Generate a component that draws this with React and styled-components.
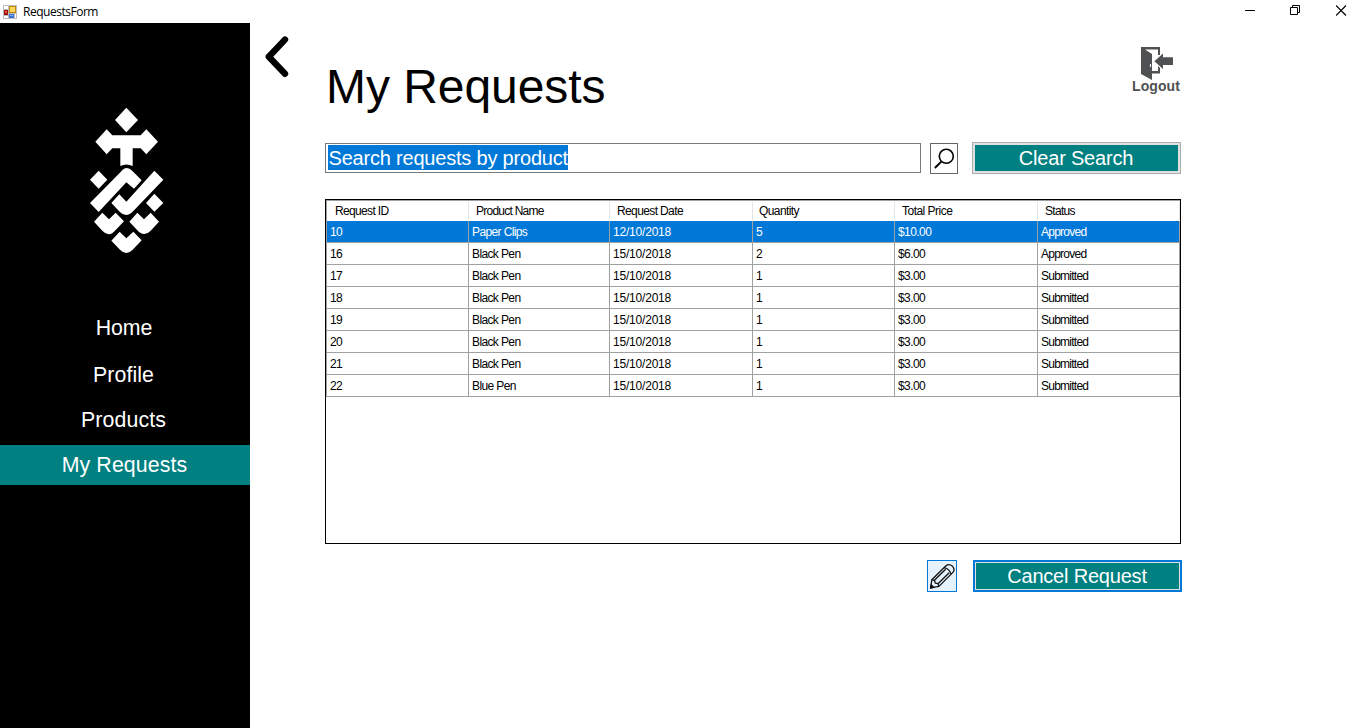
import React from "react";
import styled, { createGlobalStyle, css } from "styled-components";

const Global = createGlobalStyle`
  * { box-sizing: border-box; }
  html, body { margin: 0; height: 100%; overflow: hidden; background: #fff; }
  body { font-family: "Liberation Sans", Arial, sans-serif; color: #000; }
  button { font-family: inherit; padding: 0; margin: 0; }
`;

const Window = styled.div`
  display: flex;
  flex-direction: column;
  width: 1366px;
  height: 728px;
  background: #fff;
`;

const TitleBar = styled.header`
  display: flex;
  align-items: center;
  height: 23px;
  flex: none;
  padding: 0 20px 0 3px;
`;

const WindowTitle = styled.span`
  flex: 1;
  margin: 1px 0 0 6px;
  font: 12px/20px "Open Sans", "Noto Sans", sans-serif;
  letter-spacing: -0.48px;
`;

const WindowControls = styled.div`
  display: flex;
  gap: 35px;
  margin: -3px -1px 0 0;
  svg { display: block; }
  svg + svg { margin-left: -1px; }
  svg + svg + svg { margin-left: 0; }
`;

const Body = styled.div`
  display: flex;
  flex: 1;
  min-height: 0;
`;

const Sidebar = styled.nav`
  display: flex;
  flex-direction: column;
  width: 250px;
  background: #000;
`;

const LogoArea = styled.div`
  height: 285px;
  padding: 72px 0 0 70px;
  svg { display: block; }
`;

const NavItem = styled.a`
  display: flex;
  align-items: center;
  justify-content: center;
  height: 40px;
  margin-bottom: ${(p) => p.$gap || 5}px;
  padding-right: ${(p) => p.$inset ?? 3}px;
  color: #fff;
  font-size: 21.33px;
  letter-spacing: ${(p) => p.$spacing || "0.1px"};
  background: ${(p) => (p.$active ? "#008080" : "transparent")};
`;

const Main = styled.main`
  display: flex;
  flex: 1;
  padding: 12px 0 0 14px;
`;

const BackButton = styled.button`
  width: 26px;
  height: 44px;
  border: 0;
  background: none;
  svg { display: block; }
`;

const Content = styled.section`
  display: flex;
  flex-direction: column;
  width: 857px;
  margin-left: 35px;
`;

const Heading = styled.div`
  display: flex;
  justify-content: space-between;
  height: 107px;
`;

const PageTitle = styled.h1`
  margin: 24px 0 0 1px;
  font-size: 48px;
  line-height: 55px;
  font-weight: 400;
  letter-spacing: -0.05px;
`;

const Logout = styled.button`
  display: flex;
  flex-direction: column;
  align-items: center;
  width: 50px;
  height: 60px;
  margin: 11px 1px 0 0;
  padding: 0;
  border: 0;
  background: none;
  color: #505153;
  font-weight: 700;
  font-size: 14px;
  letter-spacing: 0.1px;
  line-height: 13px;
  svg { display: block; flex: none; }
`;

const SearchRow = styled.div`
  display: flex;
  align-items: flex-start;
  height: 57px;
`;

const SearchBox = styled.div`
  width: 596px;
  height: 30px;
  margin: 1px 9px 0 0;
  padding: 1px 2px;
  border: 1px solid #7a7a7a;
`;

const Selection = styled.span`
  display: block;
  width: 240px;
  height: 25px;
  padding-left: 0.5px;
  color: #fff;
  background: #0078d7;
  font-size: 20px;
  line-height: 26px;
  letter-spacing: -0.2px;
  white-space: nowrap;
`;

const SquareButton = styled.button`
  display: block;
  width: ${(p) => p.$width}px;
  height: ${(p) => p.$height}px;
  border: 1px solid ${(p) => (p.$hot ? "#0078d7" : "#666")};
  background: ${(p) => (p.$hot ? "#e5f1fb" : "#fff")};
  svg { display: block; }
`;

const SearchButton = styled(SquareButton)`
  margin: 1px 14px 0 0;
`;

const ActionButton = styled.button`
  width: 209px;
  height: 32px;
  padding-right: 1px;
  color: #fff;
  font-size: 20px;
  line-height: 24px;
  letter-spacing: -0.2px;
  background: #008080;
  ${(p) =>
    p.$focused
      ? css`
          border: 2px solid #0078d7;
          box-shadow: inset 0 0 0 1px #e1e1e1;
        `
      : css`
          border: 1px solid #adadad;
          box-shadow: inset 0 0 0 2px #e1e1e1;
        `}
`;

const Grid = styled.div`
  width: 856px;
  height: 345px;
  border: 1px solid #000;
  font-size: 12px;
`;

const GridRow = styled.div`
  display: grid;
  grid-template-columns: 142px 141px 143px 142px 143px 142px;
  width: 854px;
  height: 22px;
  border-left: 1px solid #a0a0a0;
  color: ${(p) => (p.$selected ? "#fff" : "#000")};
`;

const HeaderRow = styled(GridRow)`
  height: 21px;
  border-top: 1px solid #a0a0a0;
`;

const Cell = styled.div`
  padding-left: 3px;
  line-height: 22px;
  height: 22px;
  letter-spacing: ${(p) => p.$spacing};
  white-space: nowrap;
  border-right: 1px solid #a0a0a0;
  border-bottom: 1px solid #a0a0a0;
  background: ${(p) => (p.$selected ? "#0078d7" : "#fff")};
`;

const HeaderCell = styled.div`
  padding-left: ${(p) => p.$pad}px;
  line-height: 20px;
  letter-spacing: ${(p) => p.$spacing};
  white-space: nowrap;
  border-bottom: 1px solid #a0a0a0;
  background: linear-gradient(#e5e5e5, #e5e5e5) right 1px / 1px 18px no-repeat;
`;

const Footer = styled.div`
  display: flex;
  justify-content: flex-end;
  gap: 16px;
  margin-top: 16px;
`;

const FormIcon = () => (
  <svg width="14" height="14" viewBox="0 0 14 14">
    <rect width="14" height="14" fill="#bdbdbd" />
    <path d="M1 1h4v3H1zM1 11h4v2H1zM12 9h1v4h-1z" fill="#fff" />
    <rect x="6" y="1" width="7" height="7" fill="#c38a0a" />
    <rect x="7" y="2" width="5" height="5" fill="#ffd75a" />
    <rect x="1" y="5" width="4" height="5" fill="#a3130c" />
    <rect x="2" y="6" width="2" height="2" fill="#e55a4a" />
    <rect x="6" y="9" width="5" height="4" fill="#3d74d4" />
    <rect x="7" y="10" width="3" height="1" fill="#83b0f4" />
  </svg>
);

const Logo = () => (
  <svg width="110" height="170" viewBox="0 0 330 510" fill="#fff">
    <path d="M169 38L204 75L169 112L135 75Z" />
    <path d="M110 103L127 121H212L229 103L264 140L229 178L212 160H188V213Q169 204 151 213V160H127L110 178L76 140Z" />
    <path d="M86 227L112 254L86 281L60 254Z" />
    <path d="M60 324L152 231Q169 208 188 229L215 256L192 281L169 262L86 351Z" />
    <path d="M124 324L148 298L169 320L253 227L280 254L190 348Q169 371 149 350Z" />
    <path d="M253 296L280 324L253 350L228 324Z" />
    <path d="M97 353L117 373L137 353L162 379L137 405Q117 429 97 407L72 380Z" />
    <path d="M202 353L222 373L242 353L267 380L242 407Q222 428 202 406L178 380Z" />
    <path d="M149 410L169 430L190 410L215 436L188 464Q169 484 150 464L124 437Z" />
  </svg>
);

const BackIcon = () => (
  <svg width="26" height="44" viewBox="0 0 26 44" fill="none" stroke="#000" strokeWidth="6.4" strokeLinecap="round" strokeLinejoin="round">
    <path d="M21 4.6L4.8 21.8L21 38.8" />
  </svg>
);

const LogoutIcon = () => (
  <svg width="50" height="34" viewBox="0 0 50 34" fill="#505153">
    <path d="M10 1H29V9H27V3.5H14L21 8V34L10 28Z" />
    <path d="M21 25H27V20L29 22V27.5H21Z" />
    <path d="M23.4 15.3L32 7.5V11.2H42V19H32V23Z" />
    <path d="M19 18h1v3h-1z" fill="#fff" />
  </svg>
);

const SearchIcon = () => (
  <svg width="26" height="29" viewBox="0 0 26 29" fill="none" stroke="#000">
    <circle cx="15.3" cy="12.3" r="7" strokeWidth="1.6" />
    <path d="M10.3 17.6L3.8 24" strokeWidth="2" />
  </svg>
);

const PencilIcon = () => (
  <svg width="28" height="30" viewBox="0 0 28 30" fill="none" stroke="#111" strokeWidth="1.3" strokeLinejoin="round">
    <path d="M2.6 26.8L3.8 18.8L18 4.8Q21 2.3 24.3 5.1Q27.4 8.4 24.9 11.4L10.9 25.4Z" />
    <path d="M3.8 18.8L6.4 19.3L7.4 22.2L10 22.7L10.9 25.4" />
    <path d="M16.2 6.6Q21.6 7.8 23 13.2" />
    <path d="M6.4 19.3L17.6 8.3M10 22.7L21.2 11.7" />
    <path d="M2.5 27L3.1 23.8L5.9 26.4Z" fill="#111" />
  </svg>
);

const columns = [
  { name: "Request ID", pad: 8, head: "-0.65px", body: "-0.6px" },
  { name: "Product Name", pad: 7, head: "-0.75px", body: "-0.62px" },
  { name: "Request Date", pad: 7, head: "-0.62px", body: "-0.2px" },
  { name: "Quantity", pad: 6, head: "-0.6px", body: "-0.6px" },
  { name: "Total Price", pad: 7, head: "-0.52px", body: "-0.58px" },
  { name: "Status", pad: 7, head: "-0.7px", body: "-0.75px" },
];

const requests = [
  ["10", "Paper Clips", "12/10/2018", "5", "$10.00", "Approved"],
  ["16", "Black Pen", "15/10/2018", "2", "$6.00", "Approved"],
  ["17", "Black Pen", "15/10/2018", "1", "$3.00", "Submitted"],
  ["18", "Black Pen", "15/10/2018", "1", "$3.00", "Submitted"],
  ["19", "Black Pen", "15/10/2018", "1", "$3.00", "Submitted"],
  ["20", "Black Pen", "15/10/2018", "1", "$3.00", "Submitted"],
  ["21", "Black Pen", "15/10/2018", "1", "$3.00", "Submitted"],
  ["22", "Blue Pen", "15/10/2018", "1", "$3.00", "Submitted"],
];

export default function App() {
  return (
    <Window>
      <Global />
      <TitleBar>
        <FormIcon />
        <WindowTitle>RequestsForm</WindowTitle>
        <WindowControls>
          <svg width="11" height="11" viewBox="0 0 11 11" stroke="#000"><path d="M0 5.5H10" /></svg>
          <svg width="11" height="11" viewBox="0 0 11 11" fill="none" stroke="#000"><path d="M.5 2.5h7v7h-7zM2.5 2.5v-2h7v7h-2" /></svg>
          <svg width="11" height="11" viewBox="0 0 11 11" stroke="#000" strokeWidth="1.2"><path d="M0 .5L10 10.5M10 .5L0 10.5" /></svg>
        </WindowControls>
      </TitleBar>
      <Body>
        <Sidebar>
          <LogoArea><Logo /></LogoArea>
          <NavItem $gap={7} $inset={2} $spacing="-0.1px">Home</NavItem>
          <NavItem>Profile</NavItem>
          <NavItem>Products</NavItem>
          <NavItem $active $inset={1}>My Requests</NavItem>
        </Sidebar>
        <Main>
          <BackButton aria-label="Back"><BackIcon /></BackButton>
          <Content>
            <Heading>
              <PageTitle>My Requests</PageTitle>
              <Logout><LogoutIcon />Logout</Logout>
            </Heading>
            <SearchRow>
              <SearchBox><Selection>Search requests by product</Selection></SearchBox>
              <SearchButton $width={28} $height={31} aria-label="Search"><SearchIcon /></SearchButton>
              <ActionButton>Clear Search</ActionButton>
            </SearchRow>
            <Grid>
              <HeaderRow>
                {columns.map((c) => (
                  <HeaderCell key={c.name} $pad={c.pad} $spacing={c.head}>{c.name}</HeaderCell>
                ))}
              </HeaderRow>
              {requests.map((r, i) => (
                <GridRow key={r[0]} $selected={i === 0}>
                  {r.map((v, j) => (
                    <Cell key={j} $selected={i === 0} $spacing={columns[j].body}>{v}</Cell>
                  ))}
                </GridRow>
              ))}
            </Grid>
            <Footer>
              <SquareButton $hot $width={30} $height={32} aria-label="Edit"><PencilIcon /></SquareButton>
              <ActionButton $focused>Cancel Request</ActionButton>
            </Footer>
          </Content>
        </Main>
      </Body>
    </Window>
  );
}
